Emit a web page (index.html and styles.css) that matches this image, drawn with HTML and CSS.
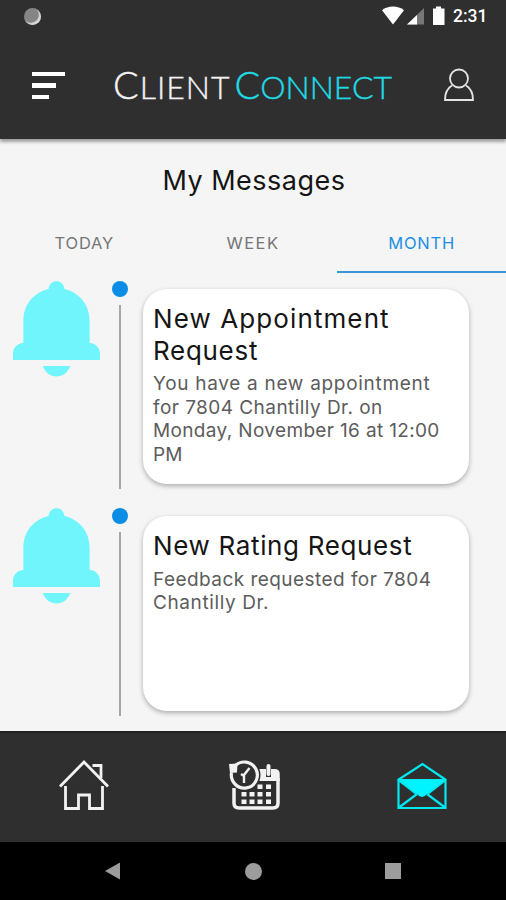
FILE: index.html
```html
<!DOCTYPE html>
<html lang="en">
<head>
    <meta charset="UTF-8">
    <meta name="viewport" content="width=device-width, initial-scale=1.0">
    <title>ClientConnect - My Messages</title>
    <link rel="stylesheet" href="styles.css">
</head>
<body>

    <div class="status-bar">
        <span class="status-dot"></span>
        <svg class="status-icons" width="64" height="20" viewBox="0 0 64 20">
            <path d="M0 4.200C6-.6 16-.6 22 4.200L11 18.500Z" fill="#fff"/>
            <path d="M25 18.500L42 2v16.500Z" fill="#777"/>
            <path d="M25 18.500L35 9v9.500Z" fill="#fff"/>
            <path d="M51 2.500h3V.5h5v2h3.500v16.500H51Z" fill="#fff"/>
        </svg>
        <span class="clock">2:31</span>
    </div>

    <header class="header">
        <div class="menu-icon">
            <span class="bar bar-long"></span>
            <span class="bar bar-mid"></span>
            <span class="bar bar-short"></span>
        </div>
        <div class="logo"><span class="logo-client"><span class="cap">C</span>LIENT</span><span class="logo-connect"><span class="cap">C</span>ONNECT</span></div>
        <svg class="user-icon" width="30" height="34" viewBox="0 0 30 34" fill="none" stroke="#e4e4e4" stroke-width="1.800">
            <circle cx="15" cy="10.500" r="9"/>
            <path d="M8 17.500C3.500 20 1 25 1 32h28c0-7-2.500-12-7-14.500"/>
        </svg>
    </header>

    <main class="content">
        <h2 class="page-title">My Messages</h2>

        <div class="tabs">
            <div class="tab today">TODAY</div>
            <div class="tab week">WEEK</div>
            <div class="tab month active">MONTH</div>
        </div>

        <div class="message">
            <svg class="bell" width="87" height="97" viewBox="0 0 88 97" preserveAspectRatio="none" fill="#70f5fd">
                <path d="M0 79V73C0 67 4 62.500 10.500 62V40C10.500 24 20 12 36 8C37-2.500 51-2.500 52 8C68 12 77.500 24 77.500 40V62C84 62.500 88 67 88 73V79Z"/>
                <path d="M30 85H58C55 92 50 95.500 44 95.500S33 92 30 85Z"/>
            </svg>
            <div class="timeline">
                <span class="dot"></span>
                <span class="line"></span>
            </div>
            <div class="card">
                <h3 class="card-title"><span class="t1">New Appointment</span><br><span class="t2">Request</span></h3>
                <p class="card-text"><span class="b1">You have a new appointment</span><br><span class="b2">for 7804 Chantilly Dr. on</span><br><span class="b3">Monday, November 16 at 12:00</span><br>PM</p>
            </div>
        </div>

        <div class="message">
            <svg class="bell" width="87" height="97" viewBox="0 0 88 97" preserveAspectRatio="none" fill="#70f5fd">
                <path d="M0 79V73C0 67 4 62.500 10.500 62V40C10.500 24 20 12 36 8C37-2.500 51-2.500 52 8C68 12 77.500 24 77.500 40V62C84 62.500 88 67 88 73V79Z"/>
                <path d="M30 85H58C55 92 50 95.500 44 95.500S33 92 30 85Z"/>
            </svg>
            <div class="timeline">
                <span class="dot"></span>
                <span class="line"></span>
            </div>
            <div class="card">
                <h3 class="card-title"><span class="t3">New Rating Request</span></h3>
                <p class="card-text"><span class="b4">Feedback requested for 7804</span><br><span class="b5">Chantilly Dr.</span></p>
            </div>
        </div>
    </main>

    <nav class="bottom-nav">
        <div class="nav-item">
            <svg width="52" height="52" viewBox="0 0 52 52" fill="none" stroke="#f2f2f2" stroke-width="2.800">
                <path d="M2 27.500L26 3L50 27.500"/>
                <path d="M34.500 6.500h8.500v12.500"/>
                <path d="M7.500 27v22.500h13V36h11v13.500h13V27"/>
            </svg>
        </div>
        <div class="nav-item">
            <svg class="calendar" width="52" height="52" viewBox="0 0 52 52">
                <path d="M5 29v15q0 5 5 5h34q5 0 5-5V19" fill="none" stroke="#f2f2f2" stroke-width="3.500"/>
                <path d="M28 10h9v8h5v-8h3.500q5.250 0 5.250 5v7H28Z" fill="#f2f2f2"/>
                <rect x="37.500" y="5" width="4" height="12" rx="2" fill="#f2f2f2"/>
                <circle cx="15.500" cy="16" r="16" fill="#2f2f2f"/>
                <path d="M6 7A13 13 0 1 1 2.500 14" fill="none" stroke="#f2f2f2" stroke-width="3.200"/>
                <path d="M0 5L8.500 4.500L8 13.500L1 14Z" fill="#f2f2f2"/>
                <path d="M20.500 9L15 16V24M15 17L12 15" fill="none" stroke="#f2f2f2" stroke-width="2.400"/>
                <g fill="#f2f2f2">
                    <rect x="28.500" y="25.500" width="5" height="4.500"/>
                    <rect x="37" y="25.500" width="5" height="4.500"/>
                    <rect x="12.500" y="33" width="5" height="4.500"/>
                    <rect x="20.500" y="33" width="5" height="4.500"/>
                    <rect x="28.500" y="33" width="5" height="4.500"/>
                    <rect x="37" y="33" width="5" height="4.500"/>
                    <rect x="12.500" y="40.500" width="5" height="4.500"/>
                    <rect x="20.500" y="40.500" width="5" height="4.500"/>
                    <rect x="28.500" y="40.500" width="5" height="4.500"/>
                    <rect x="37" y="40.500" width="5" height="4.500"/>
                </g>
            </svg>
        </div>
        <div class="nav-item">
            <svg width="52" height="52" viewBox="0 0 52 52" fill="none" stroke="#00e8f0" stroke-width="2.200">
                <path d="M2 21L26.500 5L50 21"/>
                <path d="M2.500 21h47v28h-47Z"/>
                <path d="M2.500 21h47L31 35q-2 3-5 3t-5-3Z" fill="#00f4ff" stroke="none"/>
                <path d="M3 21.500L21 35.500M49 21.500L31 35.500M3 48.500L21 35M49 48.500L31 35"/>
            </svg>
        </div>
    </nav>

    <div class="system-bar">
        <svg width="18" height="18" viewBox="0 0 18 18"><path d="M1 9L16 .5v17Z" fill="#9c9c9c"/></svg>
        <span class="home-button"></span>
        <span class="recent-button"></span>
    </div>

</body>
</html>
```

FILE: styles.css
```css
* {
    box-sizing: border-box;
}

body {
    font-family: 'Inter', 'Liberation Sans', sans-serif;
    width: 506px;
    height: 900px;
    margin: 0;
    background-color: #f5f5f5;
    overflow: hidden;
}

.status-bar {
    display: flex;
    align-items: center;
    height: 32px;
    padding: 0 19px 0 24px;
    background-color: #2f2f2f;
}

.status-dot {
    width: 17px;
    height: 17px;
    margin-right: auto;
    border-radius: 50%;
    background-color: #858585;
    box-shadow: inset -2px -2px 1px #d8d8d8;
}

.clock {
    width: 34px;
    margin-left: 7px;
    font-family: 'Roboto', sans-serif;
    font-size: 17.5px;
    font-weight: 500;
    color: white;
}

.header {
    display: flex;
    align-items: center;
    height: 107px;
    padding: 0 32px;
    background-color: #2f2f2f;
    box-shadow: 0 3px 3px rgba(0, 0, 0, 0.35);
}

.menu-icon {
    display: flex;
    flex-direction: column;
    gap: 7px;
    width: 34px;
}

.bar {
    height: 4.500px;
    background-color: white;
}

.bar-long {
    width: 33px;
}

.bar-mid {
    width: 24px;
}

.bar-short {
    width: 17px;
}

.logo {
    width: 282px;
    margin-left: 47px;
    padding-bottom: 1px;
    font-family: 'Lato', sans-serif;
    font-size: 32px;
    font-weight: 300;
    line-height: 40px;
    white-space: nowrap;
    color: #f2f2f2;
    -webkit-text-stroke: 0.4px;
}

.logo .cap {
    font-size: 38px;
}

.logo-client {
    letter-spacing: 1px;
}

.logo-connect {
    margin-left: 4px;
    color: #1fdbe5;
}

.user-icon {
    margin: 0 0 2px 49px;
    flex-shrink: 0;
}

.content {
    height: 592px;
}

.page-title {
    height: 80px;
    margin: 0;
    padding-left: 2px;
    font-size: 27px;
    font-weight: 400;
    line-height: 83px;
    letter-spacing: 0.5px;
    text-align: center;
    color: #151515;
}

.tabs {
    display: flex;
    height: 54px;
}

.tab {
    flex: 1;
    padding-top: 2px;
    font-size: 16.500px;
    line-height: 45px;
    letter-spacing: 0.8px;
    text-align: center;
    color: #757575;
}

.tab.week {
    letter-spacing: 1.4px;
}

.tab.active {
    color: #1e8fe0;
    border-bottom: 2px solid #3694d8;
}

.message {
    display: flex;
    height: 227px;
    padding: 8px 37px 8px 13px;
}

.timeline {
    display: flex;
    flex-direction: column;
    align-items: center;
    width: 16px;
    margin-left: 12px;
}

.dot {
    width: 16px;
    height: 16px;
    border-radius: 50%;
    background-color: #0b8de5;
}

.line {
    width: 2.500px;
    height: 184px;
    margin-top: 8px;
    background-color: #a5a5a5;
}

.card {
    width: 326px;
    height: 195px;
    margin: 8px 0 0 15px;
    padding: 14px 10px;
    background-color: white;
    border-radius: 24px;
    box-shadow: 0 2px 5px rgba(0, 0, 0, 0.3);
    white-space: nowrap;
}

.card-title {
    margin: 0;
    font-size: 26px;
    font-weight: 400;
    line-height: 31.500px;
    color: #151515;
}

.t1 {
    letter-spacing: 1.1px;
}

.t2 {
    letter-spacing: 0.7px;
}

.t3 {
    letter-spacing: 0.65px;
}

.card-text {
    margin: 6px 0 0;
    font-size: 19px;
    line-height: 23.500px;
    color: #5c5c5c;
}

.b1 {
    letter-spacing: 0.7px;
}

.b2,
.b4 {
    letter-spacing: 0.45px;
}

.b3 {
    letter-spacing: 0.35px;
}

.b5 {
    letter-spacing: 0.6px;
}

.bottom-nav {
    display: flex;
    height: 111px;
    padding-bottom: 6px;
    background-color: #2f2f2f;
    border-top: 2px solid #222;
}

.nav-item {
    display: flex;
    flex: 1;
    align-items: center;
    justify-content: center;
}

.calendar {
    margin-left: 3px;
}

.system-bar {
    display: flex;
    align-items: center;
    justify-content: space-between;
    height: 58px;
    padding: 0 105px 0 104px;
    background-color: black;
}

.home-button {
    width: 17px;
    height: 17px;
    border-radius: 50%;
    background-color: #9c9c9c;
}

.recent-button {
    width: 16px;
    height: 16px;
    background-color: #9c9c9c;
}
```
